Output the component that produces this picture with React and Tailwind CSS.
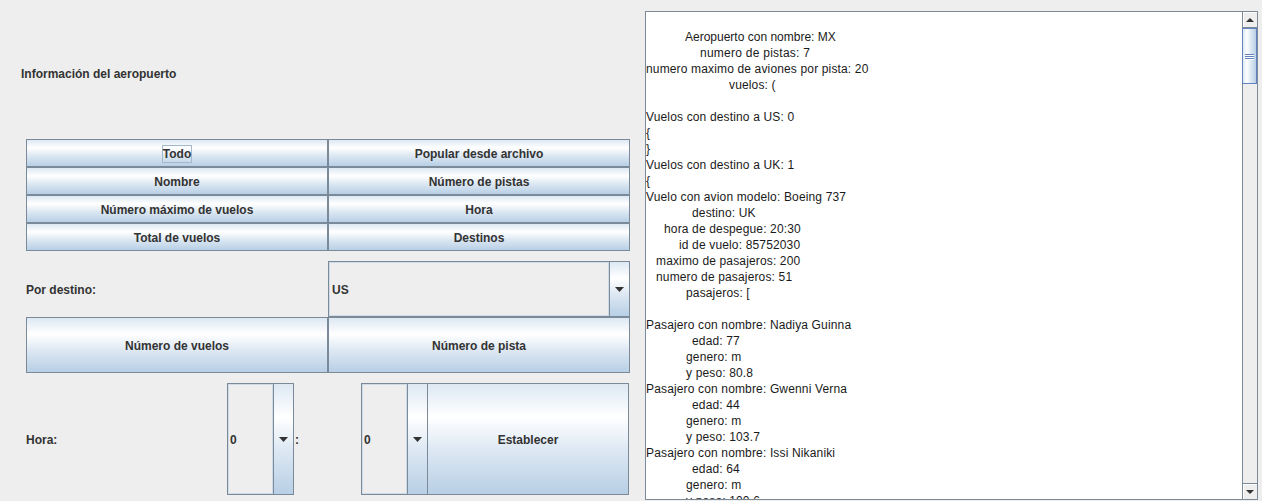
import React from "react";

const grad = "bg-[linear-gradient(to_bottom,#dde8f3_0%,#ffffff_30%,#dde8f3_60%,#b8cfe5_100%)]";

function Btn({ children, className = "" }) {
  return (
    <div
      className={`flex items-center justify-center pt-[2px] border border-[#7a8a99] ${grad} text-[12px] font-bold text-[#333333] leading-[16px] ${className}`}
    >
      {children}
    </div>
  );
}

function DownTri() {
  return (
    <svg width="9" height="5" viewBox="0 0 9 5" className="block">
      <path d="M0 0H9L4.5 5Z" fill="#333333" />
    </svg>
  );
}

function Combo({ value, className = "", textPad = "pl-[2px]", arrowW = "w-[20px]" }) {
  return (
    <div className={`flex border border-[#7a8a99] ${className}`}>
      <div
        className={`flex-1 flex items-center pt-[2px] bg-[#eeeeee] shadow-[inset_0_0_0_1px_#cfdbe7] ${textPad} text-[12px] font-bold text-[#333333] leading-[16px]`}
      >
        {value}
      </div>
      <div className={`${arrowW} shrink-0 border-l border-[#7a8a99] ${grad} flex items-center justify-center pt-[1px]`}>
        <DownTri />
      </div>
    </div>
  );
}

const lines = [
  ["pl-0", ""],
  ["pl-[39px] tracking-normal", "Aeropuerto con nombre: MX"],
  ["pl-[54px] tracking-[0.25px]", "numero de pistas: 7"],
  ["pl-0", "numero maximo de aviones por pista: 20"],
  ["pl-[83px]", "vuelos: ("],
  ["pl-0", ""],
  ["pl-0", "Vuelos con destino a US: 0"],
  ["pl-0", "{"],
  ["pl-0", "}"],
  ["pl-0", "Vuelos con destino a UK: 1"],
  ["pl-0", "{"],
  ["pl-0", "Vuelo con avion modelo: Boeing 737"],
  ["pl-[46px]", "destino: UK"],
  ["pl-[18px]", "hora de despegue: 20:30"],
  ["pl-[33px]", "id de vuelo: 85752030"],
  ["pl-[10px]", "maximo de pasajeros: 200"],
  ["pl-[10px]", "numero de pasajeros: 51"],
  ["pl-[40px]", "pasajeros: ["],
  ["pl-0", ""],
  ["pl-0", "Pasajero con nombre: Nadiya Guinna"],
  ["pl-[46px]", "edad: 77"],
  ["pl-[40px]", "genero: m"],
  ["pl-[40px]", "y peso: 80.8"],
  ["pl-0", "Pasajero con nombre: Gwenni Verna"],
  ["pl-[46px]", "edad: 44"],
  ["pl-[40px]", "genero: m"],
  ["pl-[40px]", "y peso: 103.7"],
  ["pl-0", "Pasajero con nombre: Issi Nikaniki"],
  ["pl-[46px]", "edad: 64"],
  ["pl-[40px]", "genero: m"],
  ["pl-[40px]", "y peso: 100.6"],
];

export default function App() {
  return (
    <div className="w-[1262px] h-[501px] bg-[#eeeeee] flex overflow-hidden font-['Liberation_Sans',Arial,sans-serif]">
      {/* Left panel */}
      <div className="w-[645px] shrink-0 flex flex-col">
        <div className="pt-[66px] pl-[21px] leading-[16px] text-[12px] font-bold text-[#333333]">
          Información del aeropuerto
        </div>

        <div className="mt-[57px] ml-[26px] w-[604px] grid grid-cols-2 grid-rows-[repeat(4,28px)]">
          <Btn>
            <span className="border border-[#a3b8cc] leading-[16px] -mt-[1px]">Todo</span>
          </Btn>
          <Btn>Popular desde archivo</Btn>
          <Btn>Nombre</Btn>
          <Btn>Número de pistas</Btn>
          <Btn>Número máximo de vuelos</Btn>
          <Btn>Hora</Btn>
          <Btn>Total de vuelos</Btn>
          <Btn>Destinos</Btn>
        </div>

        <div className="mt-[10px] ml-[26px] w-[604px] h-[56px] flex">
          <div className="w-[302px] flex items-center pt-[2px] text-[12px] font-bold text-[#333333] leading-[16px]">
            Por destino:
          </div>
          <Combo value="US" className="w-[302px]" textPad="pl-[3px]" />
        </div>

        <div className="ml-[26px] w-[604px] h-[56px] grid grid-cols-2">
          <Btn>Número de vuelos</Btn>
          <Btn>Número de pista</Btn>
        </div>

        <div className="mt-[10px] ml-[26px] w-[604px] h-[112px] flex">
          <div className="w-[201px] flex items-center pt-[2px] text-[12px] font-bold text-[#333333] leading-[16px]">
            Hora:
          </div>
          <Combo value="0" className="w-[67px]" textPad="pl-[2px]" />
          <div className="w-[67px] flex items-center pt-[2px] text-[12px] font-bold text-[#333333] leading-[16px] pl-[1px]">
            :
          </div>
          <Combo value="0" className="w-[67px]" textPad="pl-[2px]" />
          <Btn className="w-[202px] -ml-px">Establecer</Btn>
        </div>
      </div>

      {/* Right panel: text area in scroll pane */}
      <div className="mt-[11px] w-[613px] h-[489px] border border-[#7a8a99] flex shrink-0">
        <div className="w-[596px] bg-white overflow-hidden pt-[1px] text-[12px] leading-[16px] tracking-[0.15px] text-[#1a1a1a]">
          {lines.map(([pl, t], i) => (
            <div key={i} className={`h-[16px] whitespace-pre ${pl}`}>
              {t}
            </div>
          ))}
        </div>
        <div className="w-[15px] border-l border-[#7a8a99] bg-[#eeeeee] flex flex-col">
          <div className="h-[16px] border-b border-[#7a8a99] bg-[#eeeeee] shadow-[inset_1px_1px_0_#ffffff] flex items-center justify-center">
            <svg width="8" height="4" viewBox="0 0 8 4" className="block">
              <path d="M0 4H8L4 0Z" fill="#333333" />
            </svg>
          </div>
          <div className="h-[56px] border border-[#6382bf] -ml-px bg-[linear-gradient(to_right,#dde8f3_0%,#ffffff_30%,#dde8f3_60%,#b8cfe5_100%)] flex flex-col items-center justify-center gap-[1px]">
            <div className="w-[9px] h-[1px] bg-[#6382bf] shadow-[0_1px_0_#ffffff]" />
            <div className="w-[9px] h-[1px] bg-[#6382bf] shadow-[0_1px_0_#ffffff]" />
            <div className="w-[9px] h-[1px] bg-[#6382bf] shadow-[0_1px_0_#ffffff]" />
          </div>
          <div className="flex-1" />
          <div className="h-[16px] border-t border-[#7a8a99] bg-[#eeeeee] shadow-[inset_1px_1px_0_#ffffff] flex items-center justify-center">
            <svg width="8" height="4" viewBox="0 0 8 4" className="block">
              <path d="M0 0H8L4 4Z" fill="#333333" />
            </svg>
          </div>
        </div>
      </div>
    </div>
  );
}
